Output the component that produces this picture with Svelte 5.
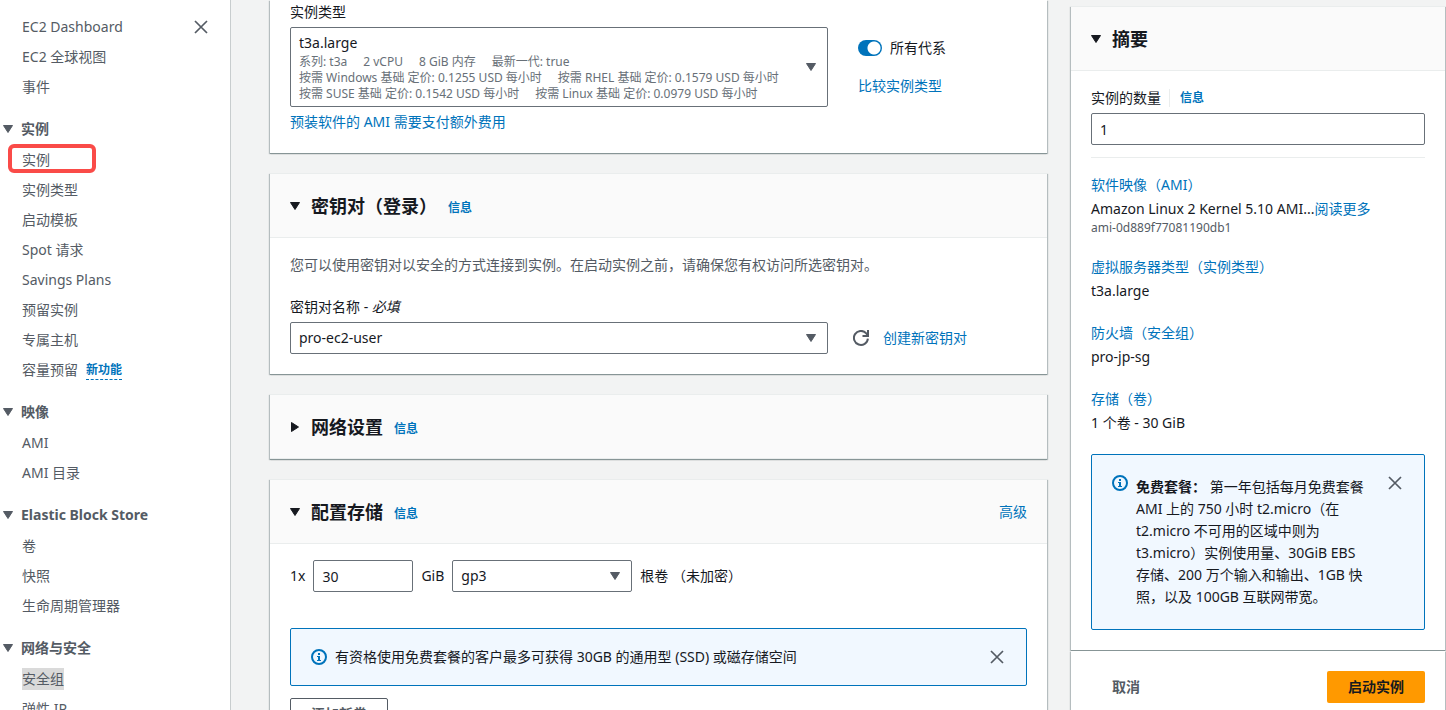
<script>
  const topLinks = ['EC2 Dashboard', 'EC2 全球视图', '事件'];
  const sections = [
    {
      title: '实例',
      items: [
        { label: '实例', marked: true },
        { label: '实例类型' },
        { label: '启动模板' },
        { label: 'Spot 请求' },
        { label: 'Savings Plans' },
        { label: '预留实例' },
        { label: '专属主机' },
        { label: '容量预留', tag: '新功能' },
      ],
    },
    { title: '映像', items: [{ label: 'AMI' }, { label: 'AMI 目录' }] },
    {
      title: 'Elastic Block Store',
      items: [{ label: '卷' }, { label: '快照' }, { label: '生命周期管理器' }],
    },
    {
      title: '网络与安全',
      items: [{ label: '安全组', selected: true }, { label: '弹性 IP' }],
    },
  ];
  const specs = [
    ['系列: t3a', '2 vCPU', '8 GiB 内存', '最新一代: true'],
    ['按需 Windows 基础 定价: 0.1255 USD 每小时', '按需 RHEL 基础 定价: 0.1579 USD 每小时'],
    ['按需 SUSE 基础 定价: 0.1542 USD 每小时', '按需 Linux 基础 定价: 0.0979 USD 每小时'],
  ];
  let quantity = $state('1');
  let size = $state('30');
  let allGenerations = $state(true);
</script>

{#snippet caret(open = true)}
  <svg class="caret" class:closed={!open} viewBox="0 0 10 10" aria-hidden="true">
    <path d="M0.5 1.5h9L5 8.5z" fill="currentColor" stroke="currentColor" stroke-linejoin="round" />
  </svg>
{/snippet}

{#snippet cross()}
  <svg class="icon" viewBox="0 0 16 16" aria-hidden="true">
    <path d="M2 2l12 12M14 2L2 14" fill="none" stroke="currentColor" stroke-width="1.7" />
  </svg>
{/snippet}

{#snippet info()}
  <svg class="icon info" viewBox="0 0 16 16" aria-hidden="true">
    <circle cx="8" cy="8" r="7" fill="none" stroke="currentColor" stroke-width="2" />
    <path d="M7 4h2v2H7zM6 7h3v4h1v1H6v-1h1V8H6z" fill="currentColor" />
  </svg>
{/snippet}

<div class="page">
  <nav class="sidebar" aria-label="EC2">
    <div class="top">
      <ul>
        {#each topLinks as link}
          <li><a href="#nav">{link}</a></li>
        {/each}
      </ul>
      <button class="plain" aria-label="关闭导航">{@render cross()}</button>
    </div>
    {#each sections as section}
      <button class="section">{@render caret()}<span>{section.title}</span></button>
      <ul>
        {#each section.items as item}
          <li class:marked={item.marked}>
            <a href="#nav" class:selected={item.selected}>{item.label}</a>
            {#if item.tag}<a href="#new" class="tag">{item.tag}</a>{/if}
          </li>
        {/each}
      </ul>
    {/each}
  </nav>

  <main>
    <section class="card first">
      <span class="label" id="type-label">实例类型</span>
      <div class="row">
        <button class="type wide" aria-haspopup="listbox" aria-labelledby="type-label">
          <span class="type-text">
            <span class="type-name">t3a.large</span>
            {#each specs as line}
              <span class="spec">{#each line as part}<span>{part}</span>{/each}</span>
            {/each}
          </span>
          {@render caret()}
        </button>
        <div class="options">
          <label class="toggle"><input type="checkbox" role="switch" bind:checked={allGenerations} />所有代系</label>
          <a href="#compare">比较实例类型</a>
        </div>
      </div>
      <a class="below" href="#cost">预装软件的 AMI 需要支付额外费用</a>
    </section>

    <section class="card">
      <header>
        <button class="heading">{@render caret()}<h2>密钥对（登录）</h2></button>
        <a class="small" href="#info">信息</a>
      </header>
      <div class="body">
        <p class="desc">您可以使用密钥对以安全的方式连接到实例。在启动实例之前，请确保您有权访问所选密钥对。</p>
        <label class="label" for="key">密钥对名称 - <em>必填</em></label>
        <div class="row center">
          <div class="select wide">
            <select id="key"><option>pro-ec2-user</option></select>
            {@render caret()}
          </div>
          <div class="create">
            <button class="plain" aria-label="刷新">
              <svg class="icon" viewBox="0 0 16 16" aria-hidden="true">
                <path d="M14.9 8.6A7 7 0 1 1 13 3.1L14.5 5" fill="none" stroke="currentColor" stroke-width="2" />
                <path d="M15 0v6H9.5" fill="none" stroke="currentColor" stroke-width="2" />
              </svg>
            </button>
            <a href="#create">创建新密钥对</a>
          </div>
        </div>
      </div>
    </section>

    <section class="card">
      <header>
        <button class="heading">{@render caret(false)}<h2>网络设置</h2></button>
        <a class="small" href="#info">信息</a>
      </header>
    </section>

    <section class="card">
      <header>
        <button class="heading">{@render caret()}<h2>配置存储</h2></button>
        <a class="small" href="#info">信息</a>
        <a class="advanced" href="#advanced">高级</a>
      </header>
      <div class="body">
        <div class="volume">
          <span>1x</span>
          <input class="text size" aria-label="大小 (GiB)" bind:value={size} />
          <span>GiB</span>
          <div class="select kind">
            <select aria-label="卷类型"><option>gp3</option></select>
            {@render caret()}
          </div>
          <span>根卷 （未加密）</span>
        </div>
        <div class="alert storage">
          {@render info()}
          <p>有资格使用免费套餐的客户最多可获得 30GB 的通用型 (SSD) 或磁存储空间</p>
          <button class="plain" aria-label="关闭">{@render cross()}</button>
        </div>
        <button class="add">添加新卷</button>
      </div>
    </section>
  </main>

  <aside>
    <section class="card">
      <header>
        <button class="heading">{@render caret()}<h2>摘要</h2></button>
      </header>
      <div class="body">
        <div class="count">
          <label for="count">实例的数量</label>
          <a class="small" href="#info">信息</a>
        </div>
        <input class="text" id="count" bind:value={quantity} />
        <hr />
        <div class="facts">
          <div>
            <a href="#ami">软件映像（AMI）</a>
            <p>Amazon Linux 2 Kernel 5.10 AMI...<a href="#more">阅读更多</a></p>
            <small>ami-0d889f77081190db1</small>
          </div>
          <div>
            <a href="#type">虚拟服务器类型（实例类型）</a>
            <p>t3a.large</p>
          </div>
          <div>
            <a href="#firewall">防火墙（安全组）</a>
            <p>pro-jp-sg</p>
          </div>
          <div>
            <a href="#storage">存储（卷）</a>
            <p>1 个卷 - 30 GiB</p>
          </div>
        </div>
        <div class="alert">
          {@render info()}
          <p><b>免费套餐：</b> 第一年包括每月免费套餐 AMI 上的 750 小时 t2.micro（在 t2.micro 不可用的区域中则为 t3.micro）实例使用量、30GiB EBS 存储、200 万个输入和输出、1GB 快照，以及 100GB 互联网带宽。</p>
          <button class="plain" aria-label="关闭">{@render cross()}</button>
        </div>
      </div>
    </section>
    <div class="card actions">
      <button class="cancel">取消</button>
      <button class="launch">启动实例</button>
    </div>
  </aside>
</div>

<style>
  :global(body) {
    background: #f2f3f3;
  }
  .page {
    display: flex;
    height: 100vh;
    overflow: hidden;
    font: 14px/22px 'Noto Sans', 'Noto Sans CJK SC', sans-serif;
    color: #16191f;
  }
  .page :is(button, input, select) {
    font: inherit;
    color: inherit;
    margin: 0;
    box-sizing: border-box;
  }
  button {
    cursor: pointer;
  }
  ul,
  p,
  h2 {
    margin: 0;
    padding: 0;
    list-style: none;
  }
  a {
    color: #0073bb;
    text-decoration: none;
  }
  .small {
    font-size: 12px;
    font-weight: 700;
  }
  .caret {
    flex: none;
    display: block;
    width: 10px;
    height: 10px;
  }
  .closed {
    transform: rotate(-90deg);
  }
  .icon {
    display: block;
    flex: none;
    width: 16px;
    height: 16px;
  }
  .plain {
    display: block;
    flex: none;
    padding: 0;
    border: 0;
    background: none;
  }
  .page .plain {
    color: #545b64;
  }

  /* Side navigation */
  .sidebar {
    flex: none;
    box-sizing: border-box;
    width: 231px;
    padding-top: 12px;
    background: #fff;
    border-right: 1px solid #c8cdce;
    color: #545b64;
  }
  .top {
    display: flex;
    justify-content: space-between;
    align-items: flex-start;
    padding-right: 21px;
  }
  .top .plain {
    padding: 7px 0;
  }
  li {
    position: relative;
    display: flex;
    align-items: center;
    gap: 8px;
    height: 30px;
    padding-left: 22px;
  }
  li a {
    color: inherit;
  }
  .marked::after {
    content: '';
    position: absolute;
    box-sizing: border-box;
    left: 8px;
    top: -1px;
    width: 88px;
    height: 29px;
    border: 4px solid #fa4b48;
    border-radius: 6px;
  }
  .selected {
    background: #dadada;
  }
  li .tag {
    border-bottom: 1px dashed #0073bb;
    font-size: 12px;
    line-height: 18px;
    font-weight: 700;
    color: #0073bb;
  }
  .page .section {
    display: flex;
    align-items: center;
    gap: 8px;
    margin: 16px 0 5px;
    padding: 0 0 0 3px;
    border: 0;
    background: none;
    font-weight: 700;
  }

  /* Cards */
  main {
    flex: 1;
    min-width: 0;
    display: flex;
    flex-direction: column;
    gap: 20px;
    padding: 0 24px 0 39px;
  }
  .card {
    flex: none;
    background: #fff;
    border-top: 1px solid #eaeded;
    box-shadow:
      0 1px 0 0 #879596,
      1px 1px 1px 0 rgba(0, 28, 36, 0.25),
      -1px 1px 1px 0 rgba(0, 28, 36, 0.25);
  }
  .first {
    padding: 1px 20px 20px;
    border-top: 0;
  }
  header {
    display: flex;
    align-items: center;
    height: 63px;
    padding: 0 20px;
    background: #fafafa;
    border-bottom: 1px solid #eaeded;
  }
  .heading {
    display: flex;
    align-items: center;
    gap: 11px;
    padding: 0;
    border: 0;
    background: none;
    text-align: left;
  }
  h2 {
    font-size: 18px;
    line-height: 22px;
    font-weight: 700;
  }
  header .small {
    margin-left: 11px;
    padding-top: 4px;
  }
  .advanced {
    margin-left: auto;
  }
  .body {
    padding: 16px 20px 20px;
  }
  .label {
    display: block;
    margin-bottom: 4px;
  }
  .row {
    display: flex;
  }
  .center {
    align-items: center;
  }
  .wide {
    flex: 0 0 73%;
  }
  .type {
    display: flex;
    align-items: center;
    justify-content: space-between;
    padding: 4px 11px 4px 8px;
    border: 1px solid #687078;
    border-radius: 2px;
    background: #fff;
    text-align: left;
  }
  .type .caret,
  .select .caret {
    color: #545b64;
  }
  .type-name {
    display: block;
  }
  .spec {
    display: flex;
    gap: 16px;
    font-size: 12px;
    line-height: 16px;
    color: #687078;
    white-space: nowrap;
  }
  .options {
    display: flex;
    flex-direction: column;
    gap: 16px;
    padding: 10px 0 0 30px;
  }
  .toggle {
    display: flex;
    align-items: center;
    gap: 8px;
  }
  .toggle input {
    appearance: none;
    width: 24px;
    height: 16px;
    border-radius: 8px;
    background: radial-gradient(circle at 16px 8px, #fff 6px, #0073bb 7px);
  }
  .below {
    display: block;
    margin-top: 4px;
  }
  .desc {
    margin-bottom: 20px;
    color: #545b64;
  }
  .select {
    display: grid;
    align-items: center;
  }
  .select > :global(*) {
    grid-area: 1 / 1;
  }
  .select .caret {
    justify-self: end;
    margin-right: 12px;
    pointer-events: none;
  }
  select,
  .text {
    appearance: none;
    width: 100%;
    height: 32px;
    padding: 0 8px;
    border: 1px solid #687078;
    border-radius: 2px;
    background: #fff;
  }
  .create {
    display: flex;
    align-items: center;
    gap: 14px;
    padding-left: 25px;
  }
  .volume {
    display: flex;
    align-items: center;
    gap: 8px;
    margin-bottom: 36px;
  }
  .size {
    width: 100px;
  }
  .kind {
    width: 180px;
  }
  .alert {
    display: flex;
    align-items: flex-start;
    gap: 8px;
    padding: 20px 21px 20px 20px;
    border: 1px solid #0073bb;
    border-radius: 2px;
    background: #f1f8ff;
  }
  .alert p {
    flex: 1;
  }
  .alert.storage {
    align-items: center;
    padding-block: 17px;
    margin-bottom: 12px;
  }
  .info {
    color: #0073bb;
  }
  .add {
    padding: 4px 20px;
    border: 1px solid #545b64;
    border-radius: 2px;
    background: #fff;
  }
  .page .add {
    color: #545b64;
    font-weight: 700;
  }

  /* Summary */
  aside {
    flex: none;
    width: 374px;
    padding: 6px 1px 0 0;
  }
  .count {
    display: flex;
    align-items: center;
    margin-bottom: 4px;
  }
  .count .small {
    margin-left: 8px;
    padding-left: 10px;
    border-left: 1px solid #eaeded;
    line-height: 18px;
  }
  .text {
    display: block;
  }
  hr {
    margin: 12px 0 16px;
    border: 0;
    border-top: 1px solid #eaeded;
  }
  .facts {
    display: grid;
    gap: 20px;
    margin-bottom: 20px;
  }
  .facts p {
    margin-top: 2px;
  }
  small {
    display: block;
    font-size: 12px;
    line-height: 16px;
    color: #545b64;
  }
  aside .alert p {
    padding: 1px 8px 1px 0;
  }
  .actions {
    display: flex;
    justify-content: space-between;
    margin-top: 1px;
    padding: 20px 20px 32px;
    border-top: 0;
  }
  .actions button {
    height: 32px;
    padding: 0 21px;
    border: 0;
    border-radius: 2px;
    background: none;
  }
  .page .actions button {
    font-weight: 700;
  }
  .page .actions .cancel {
    color: #545b64;
  }
  .actions .launch {
    background: #ff9900;
  }
</style>
